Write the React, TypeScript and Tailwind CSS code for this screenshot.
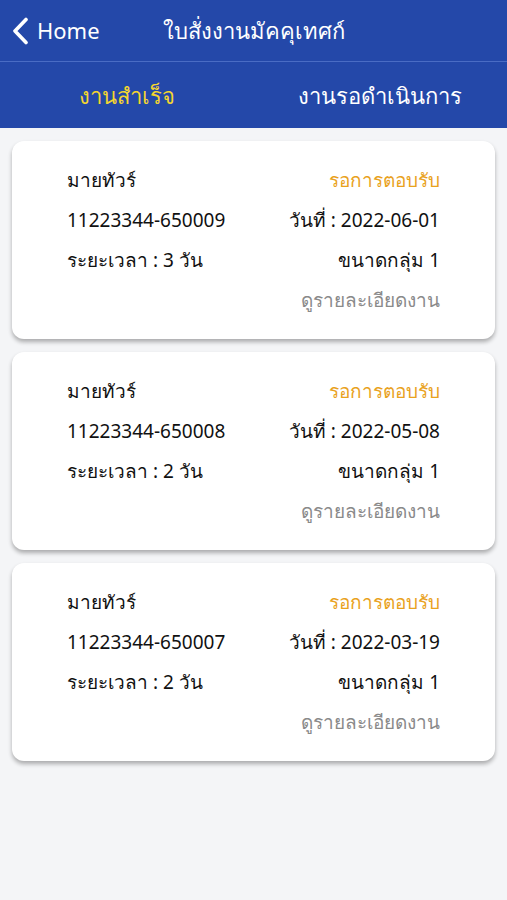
const jobs = [
  { code: "11223344-650009", date: "2022-06-01", days: 3 },
  { code: "11223344-650008", date: "2022-05-08", days: 2 },
  { code: "11223344-650007", date: "2022-03-19", days: 2 },
];

export default function App() {
  return (
    <div className="min-h-[900px] w-[507px] bg-[#f4f5f7] font-['Noto_Sans','Liberation_Sans',sans-serif]">
      <div className="bg-[#2448a9] text-white">
        <div className="relative flex h-[62px] items-center border-b border-[#4a6cc4]">
          <div className="flex items-center pl-[12px]">
            <svg width="17" height="28" viewBox="0 0 17 28" fill="none" stroke="currentColor" strokeWidth="3.6" strokeLinecap="round" strokeLinejoin="round">
              <polyline points="14,2.5 3,14 14,25.5" />
            </svg>
            <span className="ml-[8px] text-[22px]">Home</span>
          </div>
          <div className="absolute left-[163px] text-[22px]">ใบสั่งงานมัคคุเทศก์</div>
        </div>
        <div className="grid h-[66px] grid-cols-2 items-center text-[22px] font-medium">
          <div className="text-center text-[#f3d530]">งานสำเร็จ</div>
          <div className="text-center">งานรอดำเนินการ</div>
        </div>
      </div>

      <div className="flex flex-col gap-[13px] px-[12px] pt-[13px]">
        {jobs.map((job) => (
          <div
            key={job.code}
            className="flex h-[198px] flex-col justify-center gap-[16px] rounded-[12px] bg-white pl-[55px] pr-[55px] text-[19px] text-[#111] shadow-[0_3px_4px_rgba(0,0,0,0.3)]"
          >
            <div className="flex justify-between leading-[24px]">
              <span>มายทัวร์</span>
              <span className="text-[#e9a21e]">รอการตอบรับ</span>
            </div>
            <div className="flex justify-between leading-[24px]">
              <span>{job.code}</span>
              <span>วันที่ : {job.date}</span>
            </div>
            <div className="flex justify-between leading-[24px]">
              <span>ระยะเวลา : {job.days} วัน</span>
              <span>ขนาดกลุ่ม 1</span>
            </div>
            <div className="flex justify-end leading-[24px] text-[#8a8a8a]">
              <span>ดูรายละเอียดงาน</span>
            </div>
          </div>
        ))}
      </div>
    </div>
  );
}
